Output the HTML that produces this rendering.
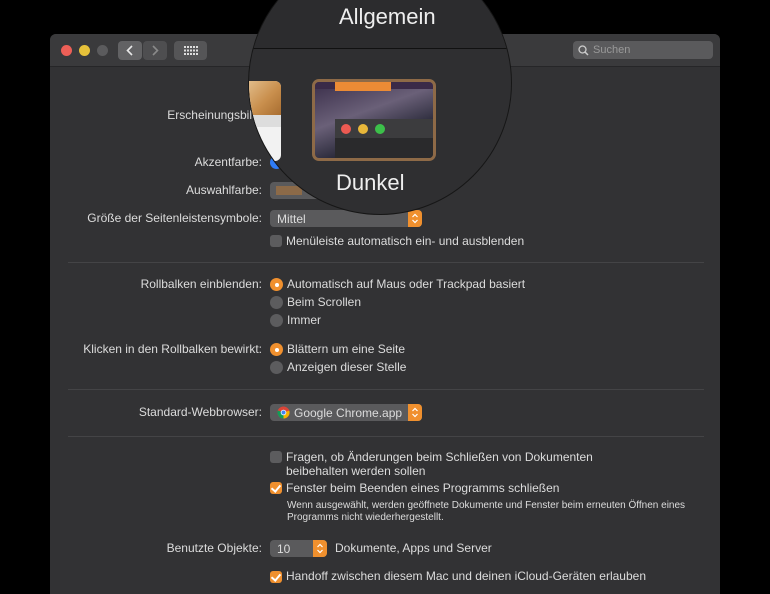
<!DOCTYPE html>
<html><head><meta charset="utf-8"><style>
*{margin:0;padding:0;box-sizing:border-box}
body{width:770px;height:578px;background:#000;position:relative;overflow:hidden;font-family:"Liberation Sans",sans-serif;font-size:12px;color:#dcdcdc}
.win{position:absolute;left:50px;top:34px;width:670px;height:560px;background:#323234;border-radius:6px 6px 0 0}
.tb{position:absolute;left:0;top:0;width:670px;height:33px;background:#3a3a3c;border-bottom:1px solid #262628;border-radius:6px 6px 0 0}
.dot{position:absolute;top:11px;width:11px;height:11px;border-radius:50%}
.a{position:absolute;white-space:nowrap}
.r{position:absolute;right:508px;white-space:nowrap;text-align:right}
.sep{position:absolute;left:68px;width:636px;height:1px;background:#444446}
.cb{position:absolute;left:270px;width:12px;height:12px;border-radius:3px;background:#5c5c5e}
.cb.on{background:#f0902e}
.cb.on:after{content:"";position:absolute;left:3px;top:1px;width:4px;height:7px;border:solid #fff;border-width:0 2px 2px 0;transform:rotate(40deg)}
.rd{position:absolute;left:270px;width:13px;height:13px;border-radius:50%;background:#5c5c5e}
.rd.on{background:#f0902e}
.rd.on:after{content:"";position:absolute;left:4.5px;top:4.5px;width:4px;height:4px;border-radius:50%;background:#fff}
.pop{position:absolute;left:270px;height:17px;background:#5a5a5c;border-radius:4px}
.step{position:absolute;right:0;top:0;width:14px;height:17px;background:#f0902e;border-radius:0 4px 4px 0}
.circ{position:absolute;left:248px;top:-49px;width:264px;height:264px;border-radius:50%;background:#2f2f31;border:1px solid #161616;overflow:hidden}
</style></head><body>
<div class="win">
 <div class="tb">
  <div class="dot" style="left:11px;background:#ed5f57"></div>
  <div class="dot" style="left:29px;background:#e6c13a"></div>
  <div class="dot" style="left:47px;background:#5b5b5d"></div>
  <div style="position:absolute;left:68px;top:7px;width:24px;height:19px;background:#626264;border-radius:4px"><svg width="24" height="19"><path d="M14 5L9.5 9.5L14 14" stroke="#e8e8e8" stroke-width="1.6" fill="none"/></svg></div>
  <div style="position:absolute;left:93px;top:7px;width:24px;height:19px;background:#4e4e50;border-radius:4px"><svg width="24" height="19"><path d="M10 5L14.5 9.5L10 14" stroke="#8a8a8a" stroke-width="1.6" fill="none"/></svg></div>
  <div style="position:absolute;left:124px;top:7px;width:33px;height:19px;background:#555557;border-radius:4px"><svg width="33" height="19" fill="#ddd">
   <rect x="10" y="5" width="2" height="2"/><rect x="13" y="5" width="2" height="2"/><rect x="16" y="5" width="2" height="2"/><rect x="19" y="5" width="2" height="2"/><rect x="22" y="5" width="2" height="2"/>
   <rect x="10" y="8.5" width="2" height="2"/><rect x="13" y="8.5" width="2" height="2"/><rect x="16" y="8.5" width="2" height="2"/><rect x="19" y="8.5" width="2" height="2"/><rect x="22" y="8.5" width="2" height="2"/>
   <rect x="10" y="12" width="2" height="2"/><rect x="13" y="12" width="2" height="2"/><rect x="16" y="12" width="2" height="2"/><rect x="19" y="12" width="2" height="2"/><rect x="22" y="12" width="2" height="2"/></svg></div>
  <div style="position:absolute;left:523px;top:7px;width:140px;height:18px;background:#5a5a5c;border-radius:4px;color:#999;line-height:18px;padding-left:20px;font-size:11px">Suchen
   <svg style="position:absolute;left:5px;top:4px" width="11" height="11"><circle cx="4.5" cy="4.5" r="3.5" stroke="#ccc" stroke-width="1.3" fill="none"/><path d="M7 7L10 10" stroke="#ccc" stroke-width="1.5"/></svg></div>
 </div>
</div>
<div class="r" style="top:108px">Erscheinungsbild:</div>
<div class="r" style="top:155px">Akzentfarbe:</div>
<div class="a" style="left:270px;top:156px;width:13px;height:13px;border-radius:50%;background:#2f7cf6"></div>
<div class="r" style="top:183px">Auswahlfarbe:</div>
<div class="pop" style="top:182px;width:60px"><div style="position:absolute;left:6px;top:4px;width:26px;height:9px;background:#8c6a48"></div></div>
<div class="r" style="top:211px">Größe der Seitenleistensymbole:</div>
<div class="pop" style="top:210px;width:152px"><span class="a" style="left:7px;top:2px">Mittel</span><div class="step"><svg width="14" height="17"><path d="M4.5 7L7 4.5L9.5 7M4.5 10L7 12.5L9.5 10" stroke="#fff" stroke-width="1.2" fill="none"/></svg></div></div>
<div class="cb" style="top:235px"></div><div class="a" style="left:286px;top:234px">Menüleiste automatisch ein- und ausblenden</div>
<div class="sep" style="top:262px"></div>
<div class="r" style="top:277px">Rollbalken einblenden:</div>
<div class="rd on" style="top:278px"></div><div class="a" style="left:287px;top:277px">Automatisch auf Maus oder Trackpad basiert</div>
<div class="rd" style="top:296px"></div><div class="a" style="left:287px;top:295px">Beim Scrollen</div>
<div class="rd" style="top:314px"></div><div class="a" style="left:287px;top:313px">Immer</div>
<div class="r" style="top:342px">Klicken in den Rollbalken bewirkt:</div>
<div class="rd on" style="top:343px"></div><div class="a" style="left:287px;top:342px">Blättern um eine Seite</div>
<div class="rd" style="top:361px"></div><div class="a" style="left:287px;top:360px">Anzeigen dieser Stelle</div>
<div class="sep" style="top:389px"></div>
<div class="r" style="top:405px">Standard-Webbrowser:</div>
<div class="pop" style="top:404px;width:152px">
 <svg class="a" style="left:7px;top:2px" width="13" height="13" viewBox="0 0 14 14"><circle cx="7" cy="7" r="6.5" fill="#db4437"/><path d="M7 7L1.4 10.3A6.5 6.5 0 0 0 7 13.5Z" fill="#0f9d58"/><path d="M7 7L1.4 10.3A6.5 6.5 0 0 1 0.9 4.8Z" fill="#0f9d58"/><path d="M7 7L13.2 5A6.5 6.5 0 0 1 7 13.5Z" fill="#f4b400"/><circle cx="7" cy="7" r="3" fill="#fff"/><circle cx="7" cy="7" r="2.2" fill="#4285f4"/></svg>
 <span class="a" style="left:24px;top:2px">Google Chrome.app</span><div class="step"><svg width="14" height="17"><path d="M4.5 7L7 4.5L9.5 7M4.5 10L7 12.5L9.5 10" stroke="#fff" stroke-width="1.2" fill="none"/></svg></div></div>
<div class="sep" style="top:436px"></div>
<div class="cb" style="top:451px"></div><div class="a" style="left:286px;top:450px;line-height:14px">Fragen, ob Änderungen beim Schließen von Dokumenten<br>beibehalten werden sollen</div>
<div class="cb on" style="top:482px"></div><div class="a" style="left:286px;top:481px">Fenster beim Beenden eines Programms schließen</div>
<div class="a" style="left:287px;top:500px;font-size:10px;line-height:12px">Wenn ausgewählt, werden geöffnete Dokumente und Fenster beim erneuten Öffnen eines<br>Programms nicht wiederhergestellt.</div>
<div class="r" style="top:541px">Benutzte Objekte:</div>
<div class="pop" style="top:540px;width:57px"><span class="a" style="left:7px;top:2px">10</span><div class="step"><svg width="14" height="17"><path d="M4.5 7L7 4.5L9.5 7M4.5 10L7 12.5L9.5 10" stroke="#fff" stroke-width="1.2" fill="none"/></svg></div></div>
<div class="a" style="left:335px;top:541px">Dokumente, Apps und Server</div>
<div class="cb on" style="top:571px"></div><div class="a" style="left:286px;top:569px">Handoff zwischen diesem Mac und deinen iCloud-Geräten erlauben</div>

<div class="circ">
 <div class="a" style="left:0;width:264px;top:0;height:97px;background:#2c2c2e;border-bottom:1px solid #111"></div>
 <div class="a" style="left:90px;top:52px;font-size:22px;color:#eee">Allgemein</div>
 <div class="a" style="left:-10px;top:129px;width:42px;height:80px;border-radius:6px;overflow:hidden;background:#f2f2f2">
  <div style="height:34px;background:linear-gradient(135deg,#e8c89a,#c98f4d 60%,#a86d30)"></div>
  <div style="height:12px;background:#ddd"></div>
 </div>
 <div class="a" style="left:63px;top:127px;width:124px;height:82px;border:3px solid #8e6a47;border-radius:7px;overflow:hidden;background:linear-gradient(160deg,#3a2e4a,#6a6078 40%,#2a2a3a 70%,#1a1e2a)">
  <div style="position:absolute;left:0;top:0;width:118px;height:7px;background:#3a2a48"></div>
  <div style="position:absolute;left:20px;top:0;width:56px;height:9px;background:#ec8b35"></div>
  <div style="position:absolute;left:20px;top:37px;width:98px;height:40px;background:#2a2a2c"></div>
  <div style="position:absolute;left:20px;top:37px;width:98px;height:19px;background:#3c3c3e"></div>
  <div style="position:absolute;left:26px;top:42px;width:10px;height:10px;border-radius:50%;background:#ec5a52"></div>
  <div style="position:absolute;left:43px;top:42px;width:10px;height:10px;border-radius:50%;background:#e8b73a"></div>
  <div style="position:absolute;left:60px;top:42px;width:10px;height:10px;border-radius:50%;background:#3cc04a"></div>
 </div>
 <div class="a" style="left:87px;top:218px;font-size:22px;color:#eee">Dunkel</div>
</div>
</body></html>
